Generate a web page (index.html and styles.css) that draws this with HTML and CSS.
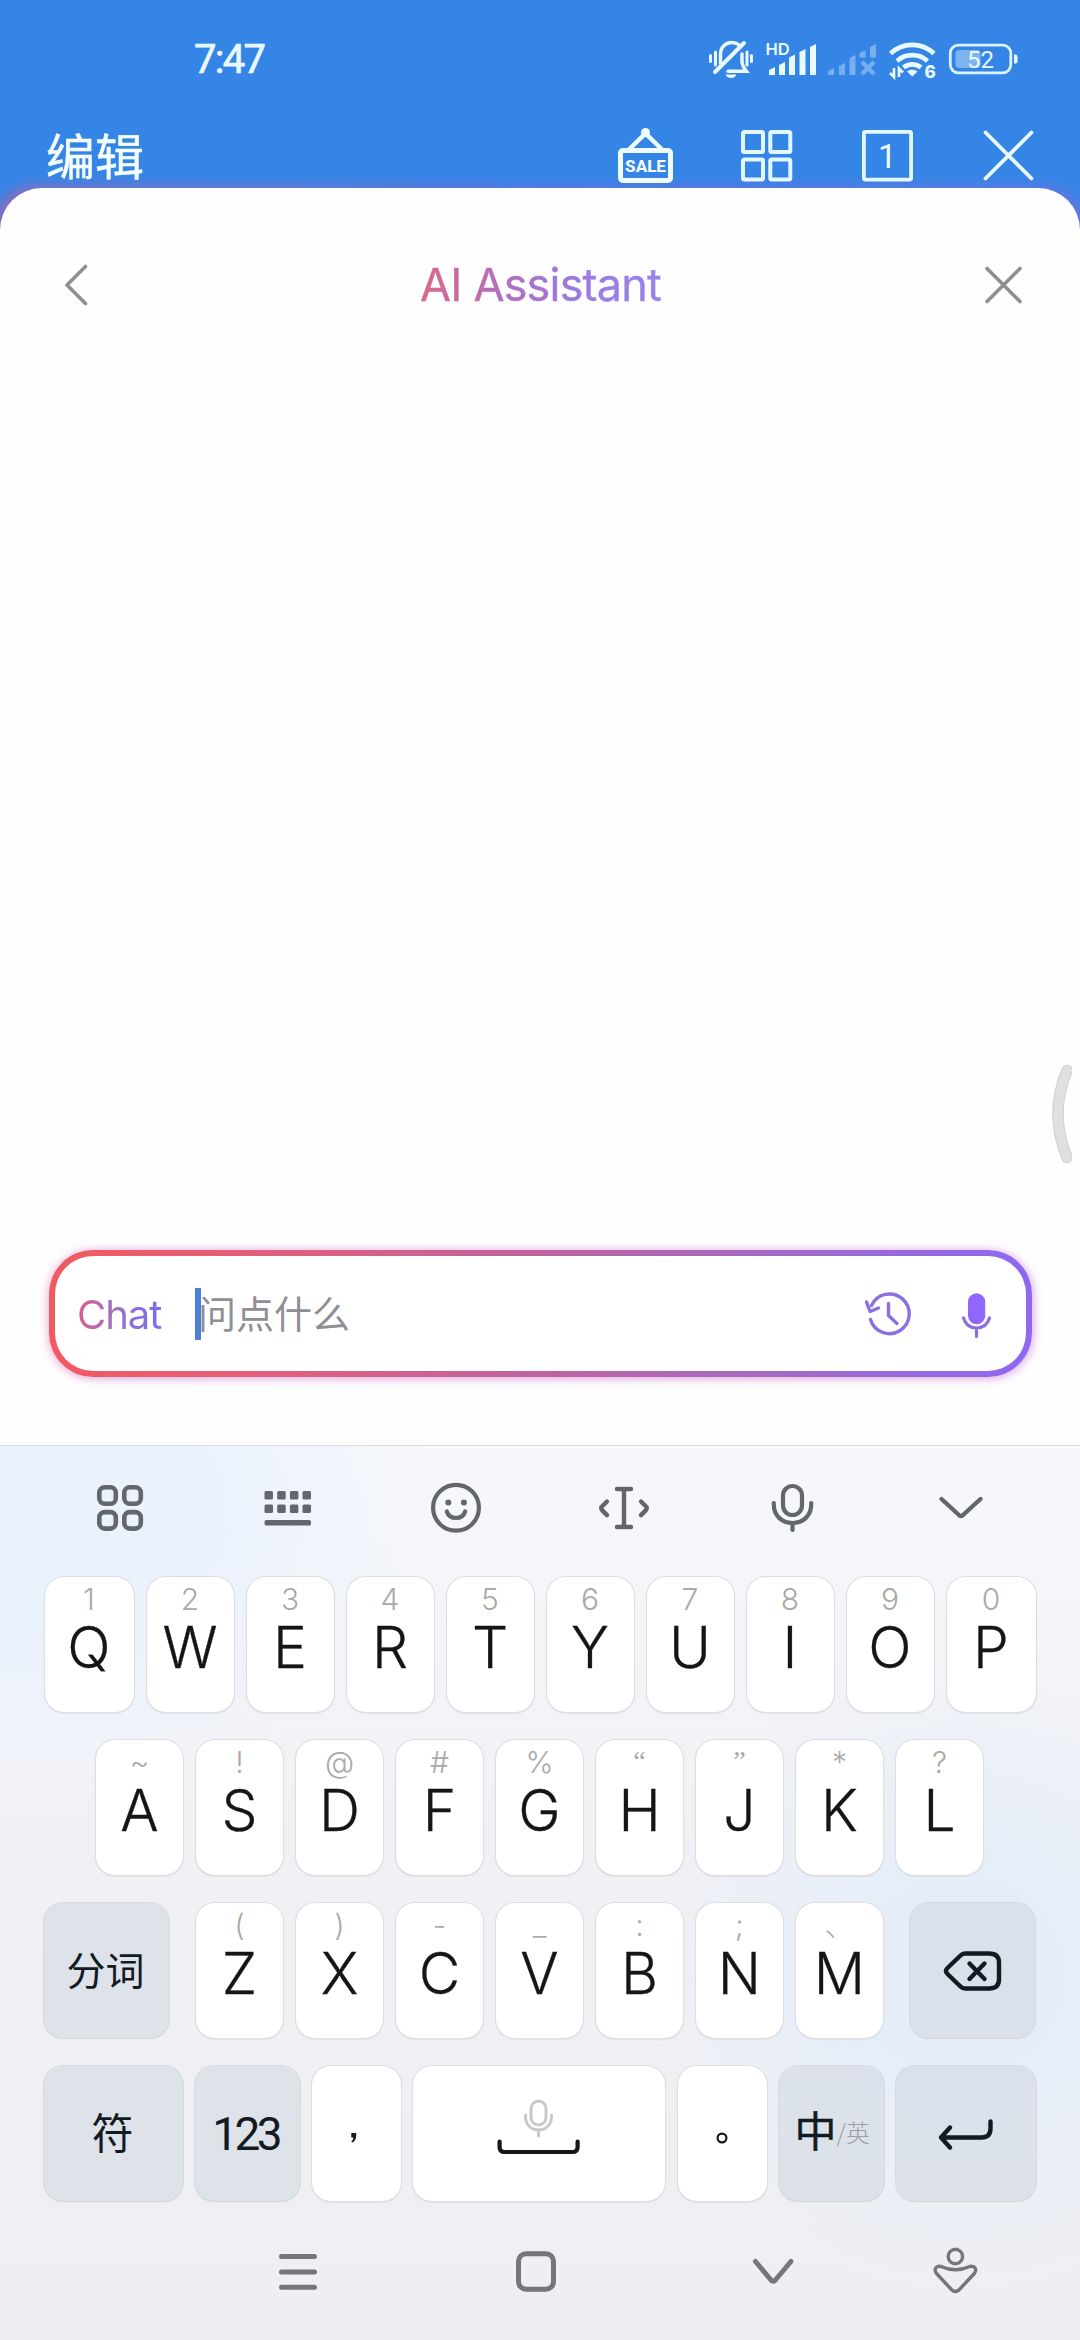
FILE: index.html
```html
<!DOCTYPE html>
<html lang="zh-CN">
<head>
<meta charset="utf-8">
<title>AI Assistant</title>
<link rel="stylesheet" href="styles.css">
</head>
<body>
<div class="phone">
  <header class="status">
    <span class="time">7:47</span>
    <div class="status-icons">
      <svg width="46" height="40" viewBox="708 39 46 40" fill="none" stroke="#e9faff" stroke-width="3.4" stroke-linecap="round">
        <path d="M720.5 63.5V55c0-8 5-12.500 11-12.500 3 0 5.500.8 7.500 2.500M742 54v8c0 3 2 6 4.500 9.300H728"/>
        <path d="M744 43L715 72" stroke-width="4"/>
        <path d="M715.500 52v13M710.500 55.500v6M747 52v13M751.500 55.500v6" stroke-width="3"/>
        <path d="M725.500 74.500h11c-1 2.500-3 3.500-5.500 3.500s-4.500-1-5.500-3.500z" fill="#e9faff" stroke="none"/>
      </svg>
      <svg class="signal" width="54" height="40" viewBox="761 39 54 40" fill="#e9faff">
        <text x="764.500" y="55" class="hd">HD</text>
        <path d="M768 70l6-3v8h-6zM778 65l6-3v13h-6zM788 57.500l6-3V75h-6zM798.500 52l6-3v26h-6zM809 47l6-3v31h-6z"/>
      </svg>
      <svg width="49" height="40" viewBox="827 39 49 40" fill="#79afef">
        <path d="M827 71l6-3v7h-6zM838 66l6-3v12h-6zM848.500 58l6-3v20h-6zM858.500 53l6-3v7.500h-6zM869 47l6-3v13.500h-6z"/>
        <path d="M861 62l12 12M873 62l-12 12" stroke="#79afef" stroke-width="4.200" fill="none"/>
      </svg>
      <svg width="47" height="48" viewBox="888 35 47 48" fill="none" stroke="#e9faff" stroke-width="4.600">
        <path d="M889.500 53.500c12.500-11.500 31-11.500 43.500 0"/>
        <path d="M896 61c8.500-7.800 22-7.800 30.500 0"/>
        <path d="M902.500 67.500c5-4.200 12.500-4.200 17.500 0"/>
        <path d="M906 71.500c3-2.300 7.500-2.300 10.500 0l-5.200 5z" fill="#e9faff" stroke="none"/>
        <path d="M893 68v9l-4-4M898 77v-8.500l4 4" stroke-width="2.600"/>
        <text x="923.500" y="77.500" class="six">6</text>
      </svg>
      <svg width="70" height="40" viewBox="948 39 70 40" fill="none">
        <rect x="955.500" y="50" width="25" height="18" rx="4" fill="#7fb3f0"/>
        <rect x="950.300" y="45.200" width="60.500" height="27.600" rx="8" stroke="#d9f3ff" stroke-width="2.800"/>
        <path d="M1014 54.500h1.500a2 2 0 0 1 2 2v5a2 2 0 0 1-2 2H1014z" fill="#e9faff"/>
        <text x="967" y="68" class="pct">52</text>
      </svg>
    </div>
  </header>

  <nav class="appbar">
    <span class="edit">编辑</span>
    <div class="app-icons">
      <svg width="60" height="70" viewBox="615 118 60 70" fill="none" stroke="#eefbff" stroke-width="5">
        <rect x="620.500" y="150.500" width="50" height="30" rx="2.500"/>
        <path d="M629 149.500l16.500-16 16.500 16" stroke-width="4.500"/>
        <circle cx="645.500" cy="132.500" r="4.500" fill="#eefbff" stroke="none"/>
        <text x="645.500" y="172" class="sale">SALE</text>
      </svg>
      <svg width="60" height="70" viewBox="736 118 60 70" fill="none" stroke="#e2f8ff" stroke-width="4">
        <rect x="743" y="132" width="20" height="20" rx="1.500"/><rect x="770.300" y="132" width="20" height="20" rx="1.500"/>
        <rect x="743" y="159.500" width="20" height="20" rx="1.500"/><rect x="770.300" y="159.500" width="20" height="20" rx="1.500"/>
      </svg>
      <svg width="60" height="70" viewBox="857 118 60 70" fill="none" stroke="#e2f8ff" stroke-width="3.800">
        <rect x="863.900" y="131.900" width="47.200" height="47.700" rx="1.500"/>
        <text x="887.200" y="167.500" class="one">1</text>
      </svg>
      <svg width="60" height="70" viewBox="978 118 60 70" fill="none" stroke="#e9faff" stroke-width="3.800" stroke-linecap="round">
        <path d="M985.500 132.500l46 46M1031.500 132.500l-46 46"/>
      </svg>
    </div>
  </nav>

  <main class="panel">
    <div class="panel-head">
      <svg width="24" height="44" viewBox="64 263 24 44" fill="none" stroke="#8f8f8f" stroke-width="3.600" stroke-linecap="round" stroke-linejoin="round"><path d="M85.500 266.500L67 285l18.500 18.500"/></svg>
      <h1 class="title">AI Assistant</h1>
      <svg width="40" height="40" viewBox="983 264.500 40 40" fill="none" stroke="#8f8f8f" stroke-width="3.600" stroke-linecap="round"><path d="M986 268l33 33M1019 268l-33 33"/></svg>
    </div>
    <div class="ask">
      <span class="mode">Chat</span>
      <span class="caret"></span>
      <span class="placeholder">问点什么</span>
      <svg class="history" width="50" height="50" viewBox="862 1289 50 50" fill="none" stroke="#8a70e0" stroke-width="3.400" stroke-linecap="round" stroke-linejoin="round">
        <path d="M869.500 1319.500A19.800 19.800 0 1 0 870.500 1305.500"/>
        <path d="M865.500 1302l3.500 9.500 8.500-3.500"/>
        <path d="M887.500 1303.500v12l8.500 8"/>
      </svg>
      <svg width="32" height="50" viewBox="960 1289 32 50" fill="none" stroke="#8a70e0" stroke-width="3.200" stroke-linecap="round">
        <rect x="967" y="1293.300" width="17.200" height="31" rx="8.600" fill="#9166ff" stroke="none"/>
        <path d="M962.500 1318c2 6.500 6.500 10 13 10s11-3.500 13-10M975.500 1328v8.500"/>
      </svg>
    </div>
    <svg class="edge-handle" width="22" height="104" viewBox="1050 1062 22 104"><path d="M1067 1070.500Q1049 1114 1067 1157.500" fill="none" stroke="#cfcfcf" stroke-width="11.500" stroke-linecap="round"/><path d="M1067 1070.500Q1049 1114 1067 1157.500" fill="none" stroke="#e0e0e0" stroke-width="9.500" stroke-linecap="round"/></svg>
  </main>

  <section class="keyboard">
    <div class="tools">
      <svg width="60" height="60" viewBox="90 1478 60 60" fill="none" stroke="#63676d" stroke-width="4.600">
        <rect x="99.300" y="1487.300" width="16.500" height="16.500" rx="5.500"/><rect x="124.300" y="1487.300" width="16.500" height="16.500" rx="5.500"/>
        <rect x="99.300" y="1512.100" width="16.500" height="16.500" rx="5.500"/><rect x="124.300" y="1512.100" width="16.500" height="16.500" rx="5.500"/>
      </svg>
      <svg width="60" height="60" viewBox="258 1478 60 60" fill="#63676d">
        <rect x="264.500" y="1491" width="8.500" height="8.500" rx="1.500"/><rect x="277.200" y="1491" width="8.500" height="8.500" rx="1.500"/><rect x="289.900" y="1491" width="8.500" height="8.500" rx="1.500"/><rect x="302.500" y="1491" width="8.500" height="8.500" rx="1.500"/>
        <rect x="264.500" y="1504.600" width="8.500" height="8.500" rx="1.500"/><rect x="277.200" y="1504.600" width="8.500" height="8.500" rx="1.500"/><rect x="289.900" y="1504.600" width="8.500" height="8.500" rx="1.500"/><rect x="302.500" y="1504.600" width="8.500" height="8.500" rx="1.500"/>
        <rect x="264.500" y="1520" width="46.500" height="5.600" rx="2"/>
      </svg>
      <svg width="60" height="60" viewBox="426 1478 60 60" fill="none" stroke="#63676d" stroke-width="4.200" stroke-linecap="round">
        <circle cx="456" cy="1507.800" r="22.900"/>
        <circle cx="448.300" cy="1502.500" r="3" fill="#63676d" stroke="none"/><circle cx="463.900" cy="1502.500" r="3" fill="#63676d" stroke="none"/>
        <path d="M446.800 1511.500c1.500 4.500 4.500 6.500 9.200 6.500s7.700-2 9.200-6.500"/>
      </svg>
      <svg width="60" height="60" viewBox="594 1478 60 60" fill="none" stroke="#63676d" stroke-width="4.400" stroke-linecap="round" stroke-linejoin="round">
        <path d="M617 1489h14M617 1527h14M624 1489v38"/>
        <path d="M607 1501.500l-5 5q-1.500 1.800 0 3.600l5 5M641 1501.500l5 5q1.500 1.800 0 3.600l-5 5"/>
      </svg>
      <svg width="60" height="60" viewBox="762 1478 60 60" fill="none" stroke="#63676d" stroke-width="4.200" stroke-linecap="round">
        <rect x="783" y="1486" width="19" height="29" rx="9.500"/>
        <path d="M773.800 1503v1.500c0 11 8 18.500 18.700 18.500s18.700-7.500 18.700-18.500V1503M792.500 1523v7"/>
      </svg>
      <svg width="60" height="60" viewBox="930 1478 60 60" fill="none" stroke="#63676d" stroke-width="4.400" stroke-linecap="round" stroke-linejoin="round"><path d="M941.500 1499l18 16.500q1.500 1.200 3 0l18-16.500"/></svg>
    </div>

    <div class="keys">
      <div class="row wide-ends">
        <div class="key"><i>1</i><b>Q</b></div><div class="key"><i>2</i><b>W</b></div><div class="key"><i>3</i><b>E</b></div><div class="key"><i>4</i><b>R</b></div><div class="key"><i>5</i><b>T</b></div><div class="key"><i>6</i><b>Y</b></div><div class="key"><i>7</i><b>U</b></div><div class="key"><i>8</i><b>I</b></div><div class="key"><i>9</i><b>O</b></div><div class="key"><i>0</i><b>P</b></div>
      </div>
      <div class="row">
        <div class="key"><i>~</i><b>A</b></div><div class="key"><i>!</i><b>S</b></div><div class="key"><i>@</i><b>D</b></div><div class="key"><i>#</i><b>F</b></div><div class="key"><i>%</i><b>G</b></div><div class="key"><i class="quote">“</i><b>H</b></div><div class="key"><i class="quote">”</i><b>J</b></div><div class="key"><i>*</i><b>K</b></div><div class="key"><i>?</i><b>L</b></div>
      </div>
      <div class="row spread">
        <div class="key fn side"><span class="cjk">分词</span></div>
        <div class="letters">
          <div class="key"><i>(</i><b>Z</b></div><div class="key"><i>)</i><b>X</b></div><div class="key"><i>-</i><b>C</b></div><div class="key"><i>_</i><b>V</b></div><div class="key"><i>:</i><b>B</b></div><div class="key"><i>;</i><b>N</b></div><div class="key"><i>、</i><b>M</b></div>
        </div>
        <div class="key fn side">
          <svg width="60" height="44" viewBox="942 1947 60 44" fill="none" stroke="#131b22" stroke-width="4.400" stroke-linejoin="round" stroke-linecap="round">
            <path d="M964 1951.500h24q10 0 10 9v17q0 9-10 9h-24q-2.500 0-4.500-2l-13-12.500q-3-3 0-6l13-12.500q2-2 4.500-2z"/>
            <path d="M968.500 1961.500l15 15.500M983.500 1961.500l-15 15.500"/>
          </svg>
        </div>
      </div>
      <div class="row bottom">
        <div class="key fn k-sym"><span class="cjk sym">符</span></div>
        <div class="key fn k-num"><span class="num">123</span></div>
        <div class="key k-punct comma"><svg width="8" height="12" viewBox="350 2132 8 12"><path d="M351.300 2133h4.900v2.500q0 4.500-3.600 7l-1.400-.8q2.200-2 2.200-4.200h-2.100z" fill="#131b22"/></svg></div>
        <div class="key k-space">
          <svg width="86" height="60" viewBox="496 2096 86 60" fill="none" stroke-linecap="round" stroke-linejoin="round">
            <g stroke="#c9c9c9" stroke-width="3"><rect x="531" y="2101" width="15" height="24" rx="7.500"/><path d="M525.500 2115v1.500c0 8 5.500 13.500 13 13.500s13-5.500 13-13.500v-1.500M538.500 2130v6"/></g>
            <path d="M499.600 2141.500v5.500q0 5 5 5h68q5 0 5-5v-5.500" stroke="#161616" stroke-width="4.200"/>
          </svg>
        </div>
        <div class="key k-punct"><svg width="12" height="12" viewBox="0 0 12 12"><circle cx="6" cy="6" r="4.400" fill="none" stroke="#161616" stroke-width="2.200"/></svg></div>
        <div class="key fn k-lang"><span class="zh">中</span><span class="en">/英</span></div>
        <div class="key fn k-enter">
          <svg width="58" height="36" viewBox="938 2114 58 36" fill="none" stroke="#131b22" stroke-width="4.400" stroke-linecap="round" stroke-linejoin="round"><path d="M991.500 2119.500v7q0 9-9 9H942M951 2125.500l-9 10 9 10"/></svg>
        </div>
      </div>
    </div>

    <div class="sysnav">
      <svg width="46" height="50" viewBox="275 2247 46 50" fill="none" stroke="#767678" stroke-width="5" stroke-linecap="round"><path d="M281.500 2256.600h33M281.500 2272h33M281.500 2287.200h33"/></svg>
      <svg width="46" height="50" viewBox="513 2247 46 50" fill="none" stroke="#767678" stroke-width="5"><rect x="518.500" y="2253.700" width="35" height="35.500" rx="7.500"/></svg>
      <svg width="46" height="50" viewBox="750 2247 46 50" fill="none" stroke="#767678" stroke-width="5" stroke-linecap="round" stroke-linejoin="round"><path d="M755.500 2261.500l15.500 18.500q2.200 2.500 4.400 0l15.500-18.500"/></svg>
      <svg width="46" height="50" viewBox="932 2247 46 50" fill="none" stroke="#767678" stroke-width="3.400" stroke-linejoin="round">
        <circle cx="955.400" cy="2256.500" r="7.200"/>
        <path d="M941 2266.500q14.400 6.500 28.800 0c5-1.500 7.500 3 4.500 7l-14.900 16q-4 4-8 0l-14.900-16c-3-4-.5-8.500 4.500-7z"/>
      </svg>
    </div>
  </section>
</div>
</body>
</html>
```

FILE: styles.css
```css
* { box-sizing: border-box; }
body {
  margin: 0;
  font-family: Inter, "Noto Sans CJK SC", sans-serif;
}
svg { display: block; flex: none; }
.phone {
  width: 1080px;
  height: 2340px;
  display: flex;
  flex-direction: column;
  overflow: hidden;
  isolation: isolate;
  background: #3585e6;
}

/* status bar */
.status {
  height: 118px;
  padding: 0 62px 0 194px;
  display: flex;
  align-items: center;
  justify-content: space-between;
}
.time {
  padding-top: 2px;
  font: 400 40px/48px Roboto, sans-serif;
  letter-spacing: -1.7px;
  color: #e9faff;
  -webkit-text-stroke: 0.7px #e9faff;
}
.status-icons { display: flex; align-items: center; gap: 12px; }
.signal { margin-left: -4px; }
.status-icons text { font-family: Inter, sans-serif; fill: #e9faff; stroke: none; }
.status-icons .hd { font-size: 16.500px; font-weight: 600; }
.status-icons .six { font-size: 17px; font-weight: 800; }
.status-icons .pct { font-family: Roboto, sans-serif; font-size: 24px; font-weight: 400; }

/* app bar */
.appbar {
  height: 70px;
  padding: 0 42px 0 46px;
  display: flex;
  justify-content: space-between;
}
.edit {
  font: 400 49px/71px "Noto Sans CJK SC", sans-serif;
  color: #f4fdff;
  -webkit-text-stroke: 0.5px #f4fdff;
}
.app-icons { display: flex; gap: 61px; }
.app-icons text { stroke: none; fill: #f2fcff; text-anchor: middle; font-family: Roboto, sans-serif; }
.sale { font-size: 17px; font-weight: 800; }
.one { font-size: 33px; }

/* assistant sheet */
.panel {
  position: relative;
  height: 1257px;
  display: flex;
  flex-direction: column;
  justify-content: space-between;
  padding: 72px 48px 68px 49px;
  background: #fefefe;
  border-radius: 42px 42px 0 0;
}
.panel::before {
  content: "";
  position: absolute;
  z-index: -1;
  inset: -3px -6px 0;
  border-radius: 42px 42px 0 0;
  background: linear-gradient(90deg, #a565b0, #8f70c4 12%, #6b70dd 50%, #6b76e0);
  filter: blur(6px);
  opacity: .8;
}
.panel-head {
  height: 50px;
  padding: 0 8px 0 15px;
  display: flex;
  align-items: center;
  justify-content: space-between;
}
.title {
  margin: 0 0 0 9px;
  font: 400 45px/50px Inter, sans-serif;
  letter-spacing: -0.8px;
  background: linear-gradient(90deg, #d8688c, #b070bd 35%, #9a7ae0 65%, #9784ec);
  -webkit-background-clip: text;
  background-clip: text;
  color: transparent;
  -webkit-text-stroke: 0.4px transparent;
}
.ask {
  height: 127px;
  padding: 0 33px 0 22px;
  display: flex;
  align-items: center;
  border: 6px solid transparent;
  border-radius: 44px;
  background:
    linear-gradient(#fff, #fff) padding-box,
    linear-gradient(90deg, #f15a5f, #df6080 25%, #bd63a0 50%, #a569c0 72%, #9369e2 90%, #8e68f2) border-box;
  box-shadow: -3px 1px 9px #ff9aa040, 3px 1px 9px #a56bff40, 0 1px 8px #e77be066;
}
.mode {
  width: 118px;
  padding-top: 2px;
  font: 400 40px/50px Inter, sans-serif;
  letter-spacing: -1px;
  background: linear-gradient(90deg, #d8608c, #9b6fc8 40px, #7e6cf0 80px);
  -webkit-background-clip: text;
  background-clip: text;
  color: transparent;
}
.caret { width: 6px; height: 52px; background: #4b80d8; }
.placeholder {
  flex: 1;
  margin-left: -3px;
  padding-bottom: 4px;
  font: 400 38px/50px "Noto Sans CJK SC", sans-serif;
  color: #8e8e94;
}
.history { margin-right: 48px; }
.edge-handle { position: absolute; left: 1050px; top: 874px; }

/* keyboard */
.keyboard {
  flex: 1;
  border-top: 1px solid #dcdde0;
  background:
    radial-gradient(ellipse 400px 300px at 40px 60px, #eaf2fc 40%, transparent),
    radial-gradient(ellipse 330px 320px at 960px 530px, #e5eef8 30%, transparent),
    linear-gradient(#f7f8fb, #f1f1f5 45%, #efeff3);
}
.tools {
  height: 131px;
  padding: 32px 90px 0;
  display: flex;
  justify-content: space-between;
}
.keys {
  display: flex;
  flex-direction: column;
  gap: 28px;
}
.row {
  height: 135px;
  display: flex;
  justify-content: center;
  gap: 13px;
}
.row:nth-child(2) { margin-right: 1px; }
.letters { display: flex; gap: 13px; }
.spread { padding: 0 45px 0 44px; justify-content: space-between; }
.bottom { padding: 0 44px; gap: 0; justify-content: space-between; }
.key {
  width: 87px;
  height: 135px;
  padding-top: 4px;
  display: flex;
  flex-direction: column;
  align-items: center;
  border-radius: 19px;
  background: #fff;
  box-shadow: 0 0 0 1px #dddee2, 0 1px 2px #c4c5ca;
}
.wide-ends .key:first-child, .wide-ends .key:last-child { width: 89px; }
.key i {
  font: 300 30px/36px Inter, "Noto Sans CJK SC", sans-serif;
  color: #a9a9a9;
}
.key .quote { font-size: 28px; font-family: "Liberation Serif", serif; line-height: 34px; height: 36px; }
.key b {
  font: 300 57px/61px Inter, sans-serif;
  color: #151515;
  -webkit-text-stroke: 0.3px #151515;
}
.fn, .k-punct, .k-space { padding: 0; align-items: center; justify-content: center; }
.fn {
  background: #d4dbe4a8;
  box-shadow: 0 0 0 1px #d6dae0, 0 1px 1px #c6cad2;
  color: #131b22;
}
.side { width: 125px; }
.cjk { padding: 0 2px 5px 0; font: 400 39px/50px "Noto Sans CJK SC", sans-serif; }
.sym { font-size: 42px; }
.num { font: 400 46px/50px Roboto, sans-serif; letter-spacing: -3.500px; padding-right: 4px; }
.k-sym { width: 139px; }
.k-num { width: 105px; }
.k-punct { width: 89px; padding-top: 9px; }
.comma { padding-right: 5px; }
.k-space { width: 252px; padding-bottom: 15px; }
.k-lang { width: 105px; flex-direction: row; padding: 0 0 10px 2px; }
.zh { font: 400 42px/50px "Noto Sans CJK SC", sans-serif; -webkit-text-stroke: 0.5px #131b22; }
.en { font: 300 24px/50px "Noto Sans CJK SC", sans-serif; color: #9aa0a8; padding-top: 6px; }
.k-enter { width: 140px; }

/* system navigation */
.sysnav {
  height: 139px;
  padding: 46px 102px 0 275px;
  display: flex;
  justify-content: space-between;
}
.sysnav svg:nth-child(2), .sysnav svg:nth-child(3) { margin-left: 56px; }
```
